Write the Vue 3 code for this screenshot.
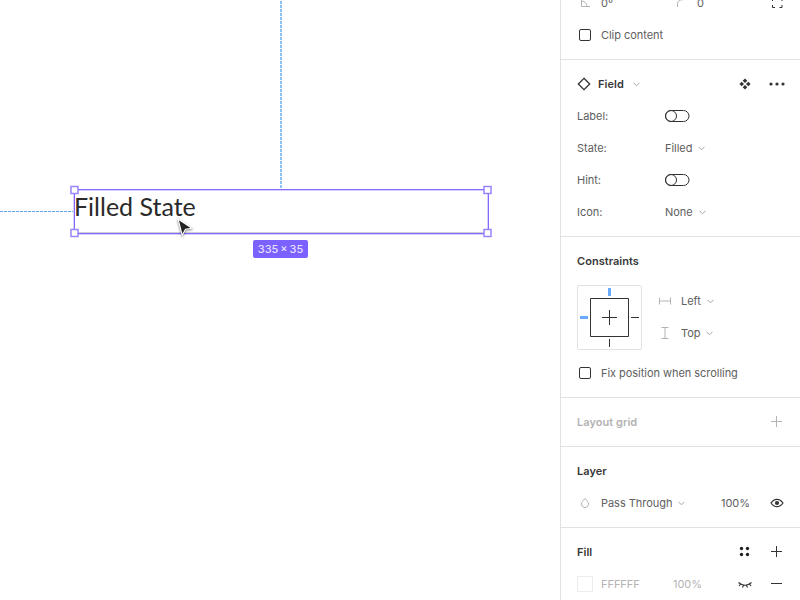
<template>
  <div class="app">
    <main class="canvas">
      <i class="guide-v"></i>
      <i class="guide-h"></i>
      <div class="layer-text">Filled State</div>
      <svg class="overlay" width="560" height="600">
        <path d="M74 232.5H488" stroke="#cfcfd8" />
        <path d="M73.5 190V233M74 190.5H488M487.5 190V233M74 234.5H488" stroke="#7b61ff" stroke-opacity=".3" />
        <path d="M74 189.5H488.5V233.5H74.5V189" fill="none" stroke="#8468ff" />
        <g v-for="h in handles" :key="h.x + '-' + h.y">
          <rect :x="h.x" :y="h.y" width="7" height="7" fill="#fff" stroke="#9a85ff" stroke-width="1.5" />
        </g>
        <path class="cursor" d="M178 219L192 228.2L185.5 229.3L182.2 235.2Z" fill="#222" stroke="#fff" stroke-width="1.1" stroke-linejoin="round" />
      </svg>
      <div class="size">335 × 35</div>
    </main>

    <aside class="panel">
      <section class="clipped">
        <div class="row">
          <svg class="lead" width="16" height="16"><path d="M4.5 1V11.5H13M4.5 6Q9.500 6.500 10 11.500" class="light" /></svg>
          <span class="angle">0°</span>
          <svg class="lead" width="16" height="16"><path d="M4.500 12V9Q4.500 4.500 11 4.500" class="light" /></svg>
          <span>0</span>
          <svg class="act end" width="32" height="32"><path d="M11.500 14V11.500H14M18.500 11.500H21V14M11.500 18V20.500H14M18.500 20.500H21V18" class="dark" /></svg>
        </div>
        <div class="row"><i class="check"></i><span>Clip content</span></div>
      </section>

      <section>
        <div class="row">
          <svg class="diamond" width="14" height="14"><path d="M7 1.300L12.700 7L7 12.700L1.300 7Z" class="dark" stroke-width="1.3" /></svg>
          <b>Field</b>
          <svg class="chev wide" width="7" height="5"><path d="M.5 .8L3.500 3.800L6.500 .8" /></svg>
          <svg class="act end" width="32" height="32">
            <path d="M16 10.400L18.300 12.700L16 15L13.700 12.700ZM16 17L18.300 19.300L16 21.600L13.700 19.300ZM12.700 13.700L15 16L12.700 18.300L10.400 16ZM19.300 13.700L21.600 16L19.300 18.300L17 16Z" fill="#333" />
          </svg>
          <svg class="act" width="32" height="32"><g fill="#333"><circle cx="10" cy="16" r="1.600" /><circle cx="16" cy="16" r="1.600" /><circle cx="22" cy="16" r="1.600" /></g></svg>
        </div>
        <div v-for="prop in props" :key="prop.label" class="row">
          <span class="prop">{{ prop.label }}:</span>
          <template v-if="prop.value">
            <span>{{ prop.value }}</span>
            <svg class="chev" width="7" height="5"><path d="M.5 .8L3.500 3.800L6.500 .8" /></svg>
          </template>
          <svg v-else width="25" height="12"><rect x=".5" y=".5" width="23.500" height="11" rx="5.500" class="dark" /><circle cx="6" cy="6" r="5.500" class="dark" /></svg>
        </div>
      </section>

      <section>
        <div class="row"><b>Constraints</b></div>
        <div class="constraints">
          <div class="box">
            <svg width="63" height="63">
              <path d="M12.500 12.500H50.500V50.500H12.500ZM24 31.500H39M31.500 24V39M53 31.500H61M31.500 53V61" class="dark" />
              <path d="M31.500 2V10M2 31.500H10" stroke="#6aabff" stroke-width="3" />
            </svg>
          </div>
          <div class="axes">
            <div class="row">
              <svg class="axis" width="14" height="14"><path d="M1.500 3.500V10.500M12.500 3.500V10.500M2 7H12" class="light" /></svg>
              <span>Left</span>
              <svg class="chev" width="7" height="5"><path d="M.5 .8L3.500 3.800L6.500 .8" /></svg>
            </div>
            <div class="row">
              <svg class="axis" width="14" height="14"><path d="M3.500 1.500H10.500M3.500 12.500H10.500M7 2V12" class="light" /></svg>
              <span>Top</span>
              <svg class="chev" width="7" height="5"><path d="M.5 .8L3.500 3.800L6.500 .8" /></svg>
            </div>
          </div>
        </div>
        <div class="row"><i class="check"></i><span>Fix position when scrolling</span></div>
      </section>

      <section>
        <div class="row muted">
          <b>Layout grid</b>
          <svg class="act end" width="32" height="32"><path d="M10 15.500H21M15.500 10V21" class="light" /></svg>
        </div>
      </section>

      <section>
        <div class="row"><b>Layer</b></div>
        <div class="row">
          <svg class="lead" width="16" height="16"><path d="M8 3.500L10.600 6.500A3.600 3.600 0 1 1 5.400 6.500Z" class="light" /></svg>
          <span>Pass Through</span>
          <svg class="chev" width="7" height="5"><path d="M.5 .8L3.500 3.800L6.500 .8" /></svg>
          <span class="opacity end">100%</span>
          <svg class="act" width="32" height="32"><path d="M10 16Q12.500 12.300 16 12.300T22 16Q19.500 19.700 16 19.700T10 16Z" class="dark" stroke-width="1.200" /><circle cx="16" cy="16" r="2.100" fill="#333" /></svg>
        </div>
      </section>

      <section>
        <div class="row">
          <b>Fill</b>
          <svg class="act end" width="32" height="32"><g fill="#222"><circle cx="12.500" cy="12.500" r="1.700" /><circle cx="18.500" cy="12.500" r="1.700" /><circle cx="12.500" cy="18.500" r="1.700" /><circle cx="18.500" cy="18.500" r="1.700" /></g></svg>
          <svg class="act" width="32" height="32"><path d="M10 15.500H21M15.500 10V21" class="dark" /></svg>
        </div>
        <div class="row muted">
          <i class="swatch"></i>
          <span class="hex">FFFFFF</span>
          <span>100%</span>
          <svg class="act end" width="32" height="32"><path d="M9.500 14.500Q16 20 22.500 14.500M11.500 16L10 18M14.500 17.300L13.500 19.500M17.500 17.300L18.500 19.500M20.500 16L22 18" class="dark" stroke-width="1.200" /></svg>
          <svg class="act" width="32" height="32"><path d="M10 15.500H21" class="dark" /></svg>
        </div>
      </section>
    </aside>
  </div>
</template>

<script setup>
const handles = [
  { x: 71, y: 186.5 },
  { x: 484, y: 186.5 },
  { x: 71, y: 229.5 },
  { x: 484, y: 229.5 },
]

const props = [
  { label: 'Label' },
  { label: 'State', value: 'Filled' },
  { label: 'Hint' },
  { label: 'Icon', value: 'None' },
]
</script>

<style>
body {
  margin: 0;
  overflow: hidden;
}
</style>

<style scoped>
.app {
  display: flex;
  width: 800px;
  height: 600px;
  overflow: hidden;
  background: #fff;
  font-family: Inter, sans-serif;
  font-size: 11px;
  color: #606060;
}
.canvas {
  position: relative;
  width: 560px;
}
.overlay {
  position: absolute;
  left: 0;
  top: 0;
}
.guide-v {
  position: absolute;
  left: 280px;
  top: 1px;
  width: 2px;
  height: 187px;
  background: repeating-linear-gradient(#8bc3f8 0 3px, #fff 3px 4px);
}
.guide-h {
  position: absolute;
  left: 0;
  top: 211px;
  width: 73px;
  height: 1px;
  background: repeating-linear-gradient(90deg, #68a6f8 0 3px, #e6f1fe 3px 4px);
}
.layer-text {
  position: absolute;
  left: 74px;
  top: 191px;
  font: 25px/30px Lato, sans-serif;
  color: #2a2a2a;
  white-space: nowrap;
}
.cursor {
  filter: drop-shadow(0 1px 1px rgba(0, 0, 0, 0.5));
}
.size {
  position: absolute;
  left: 253px;
  top: 240px;
  width: 55px;
  height: 18px;
  line-height: 18px;
  text-align: center;
  border-radius: 2px;
  background: #7b61ff;
  color: #e4dfff;
  font-weight: 500;
  word-spacing: -1px;
}
.panel {
  box-sizing: border-box;
  width: 240px;
  border-left: 1px solid #e2e2e2;
}
section {
  padding: 8px 7px 8px 16px;
  border-bottom: 1px solid #e2e2e2;
}
section:last-child {
  border: 0;
}
.clipped {
  padding-top: 0;
  margin-top: -13px;
}
.row {
  display: flex;
  align-items: center;
  height: 32px;
  letter-spacing: -0.04px;
  white-space: nowrap;
}
b {
  font-weight: 600;
  color: #383838;
  letter-spacing: 0.04px;
}
.muted,
.muted b {
  color: #b3b3b3;
}
svg {
  flex: none;
  fill: none;
}
.light {
  stroke: #b3b3b3;
}
.dark {
  stroke: #333;
}
.chev {
  margin-left: 6px;
  stroke: #a4a4a4;
}
.chev.wide {
  margin-left: 9px;
}
.end {
  margin-left: auto;
}
.lead {
  margin-right: 8px;
}
.angle {
  width: 72px;
}
.check {
  box-sizing: border-box;
  width: 12px;
  height: 12px;
  margin: 0 10px 0 2px;
  border: 1px solid #333;
  border-radius: 2px;
}
.diamond {
  margin-right: 7px;
}
.prop {
  width: 88px;
}
.constraints {
  display: flex;
  padding: 8px 0 7px;
}
.box {
  width: 63px;
  height: 63px;
  border: 1px solid #e2e2e2;
  border-radius: 2px;
}
.axes {
  margin-left: 16px;
}
.axis {
  margin-right: 9px;
}
.opacity {
  margin-right: 11px;
}
.swatch {
  box-sizing: border-box;
  width: 16px;
  height: 16px;
  margin-right: 8px;
  border: 1px solid #ececec;
}
.hex {
  width: 72px;
}
</style>
